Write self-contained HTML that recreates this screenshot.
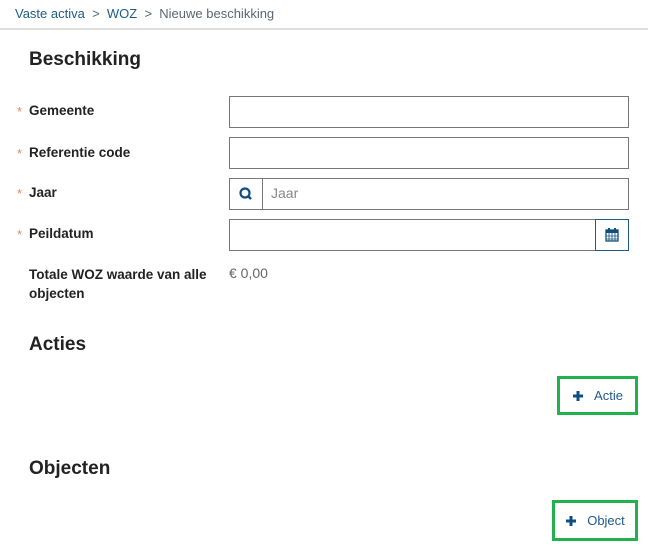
<!DOCTYPE html>
<html><head><style>
body{margin:0;width:648px;height:547px;background:#fff;font-family:"Liberation Sans",sans-serif;position:relative;overflow:hidden}
.a{position:absolute}
.crumb{top:6px;left:15px;font-size:13px;color:#5b6670}
.crumb span{color:#1e5a8a}
.hr{top:28px;left:0;width:648px;height:2px;background:#ddd}
h2{position:absolute;margin:0;font-size:19px;font-weight:bold;color:#222;left:29px}
.lbl{font-size:13.5px;font-weight:bold;color:#222;left:29px}
.st{color:#e8875a;font-size:13px;left:17px}
.in{border:1px solid #777;background:#fff;box-sizing:border-box;left:229px;width:400px;height:32px}
.btn{border:3px solid #22b14c;box-sizing:border-box;color:#1e5a8a;font-size:13px;display:flex;align-items:center;justify-content:center;gap:10px}
</style></head><body>
<div class="a crumb"><span>Vaste activa</span> &nbsp;&gt;&nbsp; <span>WOZ</span> &nbsp;&gt;&nbsp; Nieuwe beschikking</div>
<div class="a hr"></div>
<h2 style="top:49px">Beschikking</h2>

<div class="a st" style="top:104px">*</div><div class="a lbl" style="top:103px">Gemeente</div>
<div class="a in" style="top:96px"></div>
<div class="a st" style="top:146px">*</div><div class="a lbl" style="top:145px">Referentie code</div>
<div class="a in" style="top:137px"></div>
<div class="a st" style="top:186px">*</div><div class="a lbl" style="top:185px">Jaar</div>
<div class="a in" style="top:178px">
 <div class="a" style="left:0;top:0;width:32px;height:30px;border-right:1px solid #777">
  <svg width="32" height="30" viewBox="0 0 32 30"><circle cx="15" cy="14" r="4.5" fill="none" stroke="#0e4f80" stroke-width="2.2"/><line x1="18" y1="17" x2="21" y2="20" stroke="#0e4f80" stroke-width="2.4"/></svg>
 </div>
 <div class="a" style="left:41px;top:6px;font-size:14px;color:#888">Jaar</div>
</div>
<div class="a st" style="top:227px">*</div><div class="a lbl" style="top:226px">Peildatum</div>
<div class="a in" style="top:219px">
 <div class="a" style="right:-1px;top:-1px;width:34px;height:32px;border:1px solid #1e5a8a;box-sizing:border-box;background:#fff">
  <svg width="32" height="30" viewBox="0 0 32 30"><rect x="10" y="10" width="12" height="11" fill="none" stroke="#0e4f80" stroke-width="1.3"/><rect x="10" y="10" width="12" height="3" fill="#0e4f80"/><path d="M10 16h12M10 19h12M13 13v8M16 13v8M19 13v8" stroke="#0e4f80" stroke-width="0.8"/><rect x="12" y="8" width="2" height="3" fill="#0e4f80"/><rect x="18" y="8" width="2" height="3" fill="#0e4f80"/></svg>
 </div>
</div>
<div class="a lbl" style="top:265px;line-height:19px;width:190px">Totale WOZ waarde van alle objecten</div>
<div class="a" style="top:265px;left:229px;font-size:14px;color:#666">€ 0,00</div>

<h2 style="top:334px">Acties</h2>
<div class="a btn" style="left:557px;top:376px;width:81px;height:39px"><svg width="12" height="12" viewBox="0 0 12 12"><path d="M6 1v10M1 6h10" stroke="#0e4f80" stroke-width="3"/></svg>Actie</div>
<h2 style="top:458px">Objecten</h2>
<div class="a btn" style="left:552px;top:500px;width:86px;height:41px"><svg width="12" height="12" viewBox="0 0 12 12"><path d="M6 1v10M1 6h10" stroke="#0e4f80" stroke-width="3"/></svg>Object</div>
</body></html>
